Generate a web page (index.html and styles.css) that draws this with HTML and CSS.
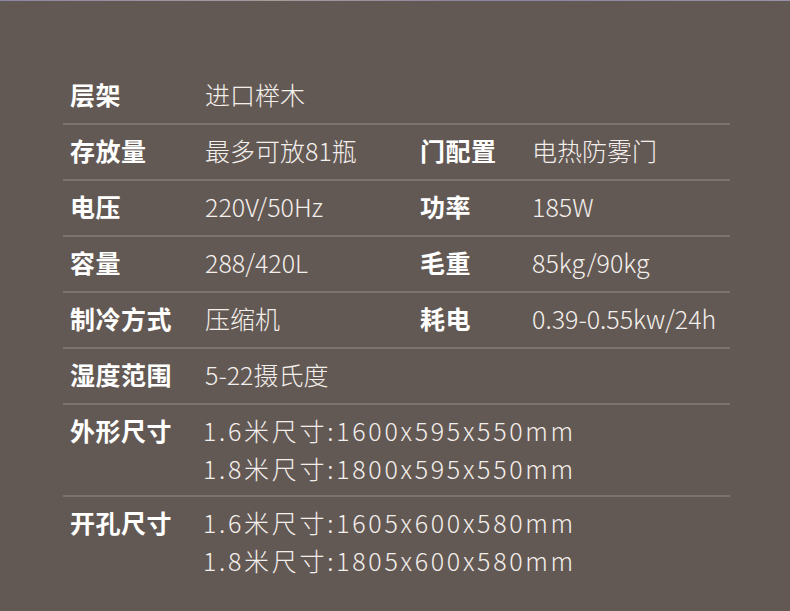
FILE: index.html
```html
<!DOCTYPE html>
<html lang="zh-CN">
<head>
    <meta charset="UTF-8">
    <meta name="viewport" content="width=device-width, initial-scale=1.0">
    <title>产品参数</title>
    <link rel="stylesheet" href="styles.css">
</head>
<body>
    <div class="topline"></div>
    <div class="specs">
        <div class="row">
            <span class="label">层架</span>
            <span class="value">进口榉木</span>
        </div>
        <div class="row">
            <span class="label">存放量</span>
            <span class="value">最多可放81瓶</span>
            <span class="label">门配置</span>
            <span class="value">电热防雾门</span>
        </div>
        <div class="row">
            <span class="label">电压</span>
            <span class="value">220V/50Hz</span>
            <span class="label">功率</span>
            <span class="value">185W</span>
        </div>
        <div class="row">
            <span class="label">容量</span>
            <span class="value">288/420L</span>
            <span class="label">毛重</span>
            <span class="value">85kg/90kg</span>
        </div>
        <div class="row">
            <span class="label">制冷方式</span>
            <span class="value">压缩机</span>
            <span class="label">耗电</span>
            <span class="value">0.39-0.55kw/24h</span>
        </div>
        <div class="row">
            <span class="label">湿度范围</span>
            <span class="value">5-22摄氏度</span>
        </div>
        <div class="row tall">
            <span class="label">外形尺寸</span>
            <div class="lines">
                <span>1.6米尺寸:1600x595x550mm</span>
                <span>1.8米尺寸:1800x595x550mm</span>
            </div>
        </div>
        <div class="row tall last">
            <span class="label">开孔尺寸</span>
            <div class="lines">
                <span>1.6米尺寸:1605x600x580mm</span>
                <span>1.8米尺寸:1805x600x580mm</span>
            </div>
        </div>
    </div>
</body>
</html>
```
FILE: styles.css
```css
body {
    margin: 0;
    height: 611px;
    overflow: hidden;
    background-color: #635954;
    font-family: "Noto Sans CJK SC", "Noto Sans", sans-serif;
    color: #fff;
}
.topline {
    height: 1px;
    background: linear-gradient(90deg, #8d87a6, #a99a9c 35%, #8a84a0 60%, #9791ab);
}
.specs {
    width: 667px;
    margin-left: 63px;
    padding-top: 68px;
}
.row {
    display: grid;
    grid-template-columns: 135px 215px 112px 1fr;
    align-items: center;
    height: 54px;
    padding-left: 7px;
    border-bottom: 2px solid #7d726d;
    box-sizing: content-box;
}
.row > span {
    margin-top: -4px;
}
.label {
    font-size: 25px;
    font-weight: 700;
    letter-spacing: 0.5px;
}
.value {
    font-size: 25px;
    font-weight: 300;
    color: #f3efec;
}
.row.tall {
    height: auto;
    align-items: start;
    padding-top: 8px;
    padding-bottom: 8px;
}
.row.tall > span {
    margin-top: 0;
}
.row.tall .label {
    line-height: 38px;
    margin-top: -2px;
}
.row.last {
    border-bottom: none;
}
.lines {
    grid-column: 2 / 5;
    display: flex;
    flex-direction: column;
    margin-left: -2px;
    margin-top: -2px;
}
.lines span {
    font-size: 25px;
    font-weight: 300;
    line-height: 38px;
    letter-spacing: 2.7px;
    color: #f3efec;
}
```
